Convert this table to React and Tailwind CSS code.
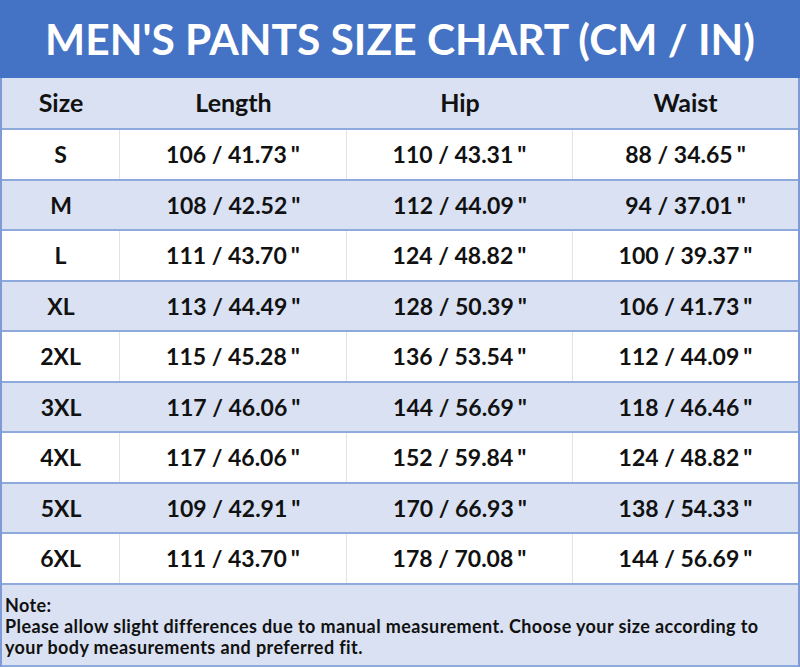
const rows = [
  ['S', '106 / 41.73', '110 / 43.31', '88 / 34.65'],
  ['M', '108 / 42.52', '112 / 44.09', '94 / 37.01'],
  ['L', '111 / 43.70', '124 / 48.82', '100 / 39.37'],
  ['XL', '113 / 44.49', '128 / 50.39', '106 / 41.73'],
  ['2XL', '115 / 45.28', '136 / 53.54', '112 / 44.09'],
  ['3XL', '117 / 46.06', '144 / 56.69', '118 / 46.46'],
  ['4XL', '117 / 46.06', '152 / 59.84', '124 / 48.82'],
  ['5XL', '109 / 42.91', '170 / 66.93', '138 / 54.33'],
  ['6XL', '111 / 43.70', '178 / 70.08', '144 / 56.69'],
]

const App = () => {
  return (
    <div className="w-[800px] h-[668px] bg-white font-['Lato','Open_Sans',sans-serif] font-bold text-[#111]">
      <div className="h-[78px] bg-[#4472C4] flex items-center justify-center">
        <h1 className="text-white text-[42.5px] leading-none">MEN'S PANTS SIZE CHART (CM / IN)</h1>
      </div>
      <div className="border-x-2 border-[#7F9BD6]">
        <div className="grid grid-cols-[118px_227px_226px_1fr] h-[52px] bg-[#D9E1F2] border-b-2 border-[#8EA9DB] text-[25px] items-center text-center">
          <div>Size</div>
          <div>Length</div>
          <div>Hip</div>
          <div>Waist</div>
        </div>
        {rows.map((r, i) => (
          <div
            key={r[0]}
            className={`grid grid-cols-[118px_227px_226px_1fr] h-[50.5px] border-b-2 border-[#8EA9DB] text-[23px] text-center ${i % 2 ? 'bg-[#D9E1F2]' : 'bg-white'}`}
          >
            {r.map((c, j) => (
              <div
                key={j}
                className={`flex items-center justify-center ${j < 3 && i % 2 === 0 ? 'border-r border-[#E3E3E3]' : ''}`}
              >
                {j === 0 ? c : <span>{c}<span className="ml-[4px]">"</span></span>}
              </div>
            ))}
          </div>
        ))}
        <div className="h-[82px] bg-[#D9E1F2] border-b-2 border-[#8EA9DB] px-[3px] pt-[10px] text-[18px] tracking-[0.4px] leading-[21px]">
          <p>Note:</p>
          <p>
            Please allow slight differences due to manual measurement. Choose your size according to
            <br />
            your body measurements and preferred fit.
          </p>
        </div>
      </div>
    </div>
  )
}

export default App
